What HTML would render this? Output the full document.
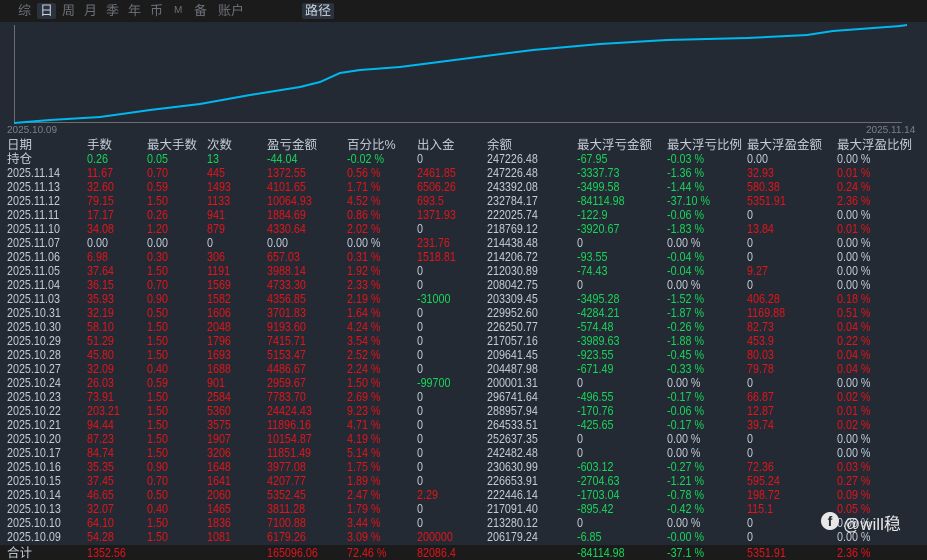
<!DOCTYPE html>
<html><head><meta charset="utf-8"><style>
body{margin:0;width:927px;height:560px;background:#232a33;overflow:hidden;font-family:"Liberation Sans","Noto Sans CJK SC",sans-serif;font-size:12.5px;color:#c4ccd8;position:relative}
.top{position:absolute;left:0;top:0;width:927px;height:22px;background:#1b1b1b}
.tab{position:absolute;top:3px;font-size:13px;color:#6b7079;line-height:16px}
.sel{background:#2a323d;color:#c8d2de;padding:0 3px;border-radius:2px}
.r{position:absolute;left:0;width:927px;height:14px;line-height:14px}
.r span{position:absolute;top:0;white-space:nowrap;transform:scaleX(0.86);transform-origin:0 0}
.h span{font-size:12.5px;transform:none}
.g{color:#19d45a}.d{color:#e3141b}
.tot{position:absolute;left:0;top:545px;width:927px;height:15px;background:#1b1b1b}
</style></head><body>
<div class="top"></div>
<div class="tab" style="left:18px">综</div>
<div class="tab sel" style="left:37px">日</div>
<div class="tab" style="left:62px">周</div>
<div class="tab" style="left:84px">月</div>
<div class="tab" style="left:106px">季</div>
<div class="tab" style="left:128px">年</div>
<div class="tab" style="left:150px">币</div>
<div class="tab" style="left:174px;font-size:10px">M</div>
<div class="tab" style="left:194px">备</div>
<div class="tab" style="left:218px">账户</div>
<div class="tab sel" style="left:302px">路径</div>
<svg style="position:absolute;left:0;top:0" width="927" height="140">
<line x1="14.5" y1="25" x2="14.5" y2="123" stroke="#6a6e74"/>
<line x1="14" y1="122.5" x2="902" y2="122.5" stroke="#6a6e74"/>
<polyline fill="none" stroke="#00b8f0" stroke-width="2" points="14,123 50,120 100,117 150,110 200,104 250,95 300,87 320,82 340,73 360,70 400,67 470,58 533,50 600,44 667,40 747,38 807,35 833,31 860,29 900,26 907,25"/>
<text x="7" y="133" font-size="10" fill="#7b818a" font-family="Liberation Sans">2025.10.09</text>
<text x="866" y="133" font-size="10" fill="#7b818a" font-family="Liberation Sans">2025.11.14</text>
</svg>
<div class="tot"></div>
<div id="t"></div>
<script>
var X=[7,87,147,207,267,347,417,487,577,667,747,837];
var rows=[
["h","日期","手数","最大手数","次数","盈亏金额","百分比%","出入金","余额","最大浮亏金额","最大浮亏比例","最大浮盈金额","最大浮盈比例"],
["p","持仓","0.26","0.05","13","-44.04","-0.02 %","0","247226.48","-67.95","-0.03 %","0.00","0.00 %"],
["2025.11.14","11.67","0.70","445","1372.55","0.56 %","2461.85","247226.48","-3337.73","-1.36 %","32.93","0.01 %"],
["2025.11.13","32.60","0.59","1493","4101.65","1.71 %","6506.26","243392.08","-3499.58","-1.44 %","580.38","0.24 %"],
["2025.11.12","79.15","1.50","1133","10064.93","4.52 %","693.5","232784.17","-84114.98","-37.10 %","5351.91","2.36 %"],
["2025.11.11","17.17","0.26","941","1884.69","0.86 %","1371.93","222025.74","-122.9","-0.06 %","0","0.00 %"],
["2025.11.10","34.08","1.20","879","4330.64","2.02 %","0","218769.12","-3920.67","-1.83 %","13.84","0.01 %"],
["2025.11.07","0.00","0.00","0","0.00","0.00 %","231.76","214438.48","0","0.00 %","0","0.00 %"],
["2025.11.06","6.98","0.30","306","657.03","0.31 %","1518.81","214206.72","-93.55","-0.04 %","0","0.00 %"],
["2025.11.05","37.64","1.50","1191","3988.14","1.92 %","0","212030.89","-74.43","-0.04 %","9.27","0.00 %"],
["2025.11.04","36.15","0.70","1569","4733.30","2.33 %","0","208042.75","0","0.00 %","0","0.00 %"],
["2025.11.03","35.93","0.90","1582","4356.85","2.19 %","-31000","203309.45","-3495.28","-1.52 %","406.28","0.18 %"],
["2025.10.31","32.19","0.50","1606","3701.83","1.64 %","0","229952.60","-4284.21","-1.87 %","1169.88","0.51 %"],
["2025.10.30","58.10","1.50","2048","9193.60","4.24 %","0","226250.77","-574.48","-0.26 %","82.73","0.04 %"],
["2025.10.29","51.29","1.50","1796","7415.71","3.54 %","0","217057.16","-3989.63","-1.88 %","453.9","0.22 %"],
["2025.10.28","45.80","1.50","1693","5153.47","2.52 %","0","209641.45","-923.55","-0.45 %","80.03","0.04 %"],
["2025.10.27","32.09","0.40","1688","4486.67","2.24 %","0","204487.98","-671.49","-0.33 %","79.78","0.04 %"],
["2025.10.24","26.03","0.59","901","2959.67","1.50 %","-99700","200001.31","0","0.00 %","0","0.00 %"],
["2025.10.23","73.91","1.50","2584","7783.70","2.69 %","0","296741.64","-496.55","-0.17 %","66.87","0.02 %"],
["2025.10.22","203.21","1.50","5360","24424.43","9.23 %","0","288957.94","-170.76","-0.06 %","12.87","0.01 %"],
["2025.10.21","94.44","1.50","3575","11896.16","4.71 %","0","264533.51","-425.65","-0.17 %","39.74","0.02 %"],
["2025.10.20","87.23","1.50","1907","10154.87","4.19 %","0","252637.35","0","0.00 %","0","0.00 %"],
["2025.10.17","84.74","1.50","3206","11851.49","5.14 %","0","242482.48","0","0.00 %","0","0.00 %"],
["2025.10.16","35.35","0.90","1648","3977.08","1.75 %","0","230630.99","-603.12","-0.27 %","72.36","0.03 %"],
["2025.10.15","37.45","0.70","1641","4207.77","1.89 %","0","226653.91","-2704.63","-1.21 %","595.24","0.27 %"],
["2025.10.14","46.65","0.50","2060","5352.45","2.47 %","2.29","222446.14","-1703.04","-0.78 %","198.72","0.09 %"],
["2025.10.13","32.07","0.40","1465","3811.28","1.79 %","0","217091.40","-895.42","-0.42 %","115.1","0.05 %"],
["2025.10.10","64.10","1.50","1836","7100.88","3.44 %","0","213280.12","0","0.00 %","0","0.00 %"],
["2025.10.09","54.28","1.50","1081","6179.26","3.09 %","200000","206179.24","-6.85","-0.00 %","0","0.00 %"],
["t","合计","1352.56","","","165096.06","72.46 %","82086.4","","-84114.98","-37.1 %","5351.91","2.36 %"]
];
function col(v,i,kind){
 if(kind=="h"||i==0||i==7)return "";
 if(kind=="p"){return (i<=5||i==8||i==9)?"g":"";}
 if(v===""||v=="0"||/^0\.00/.test(v))return "";
 if(v.charAt(0)=="-")return "g";
 return "d";
}
var h="";
rows.forEach(function(r,k){
 var kind="",c=r;
 if(r[0]=="h"||r[0]=="p"||r[0]=="t"){kind=r[0];c=r.slice(1);}
 var y=kind=="h"?138:kind=="p"?152:kind=="t"?546:166+(k-2)*14;
 h+='<div class="r'+(kind=="h"?" h":"")+'" style="top:'+y+'px">';
 c.forEach(function(v,i){var cl=col(v,i,kind);if(kind=="t"&&i==0)cl="";var st='left:'+X[i]+'px';if((kind=="p"||kind=="t")&&i==0)st+=';transform:none';h+='<span class="'+cl+'" style="'+st+'">'+v+'</span>';});
 h+='</div>';
});
document.getElementById("t").innerHTML=h;
</script>
<div style="position:absolute;left:821px;top:512px;width:18px;height:18px;border-radius:50%;background:#e8e8e8;color:#232a33;font-weight:bold;font-size:14px;line-height:19px;text-align:center">f</div>
<div style="position:absolute;left:843px;top:510px;font-size:17px;color:#e8e8e8">@will稳</div>
</body></html>
